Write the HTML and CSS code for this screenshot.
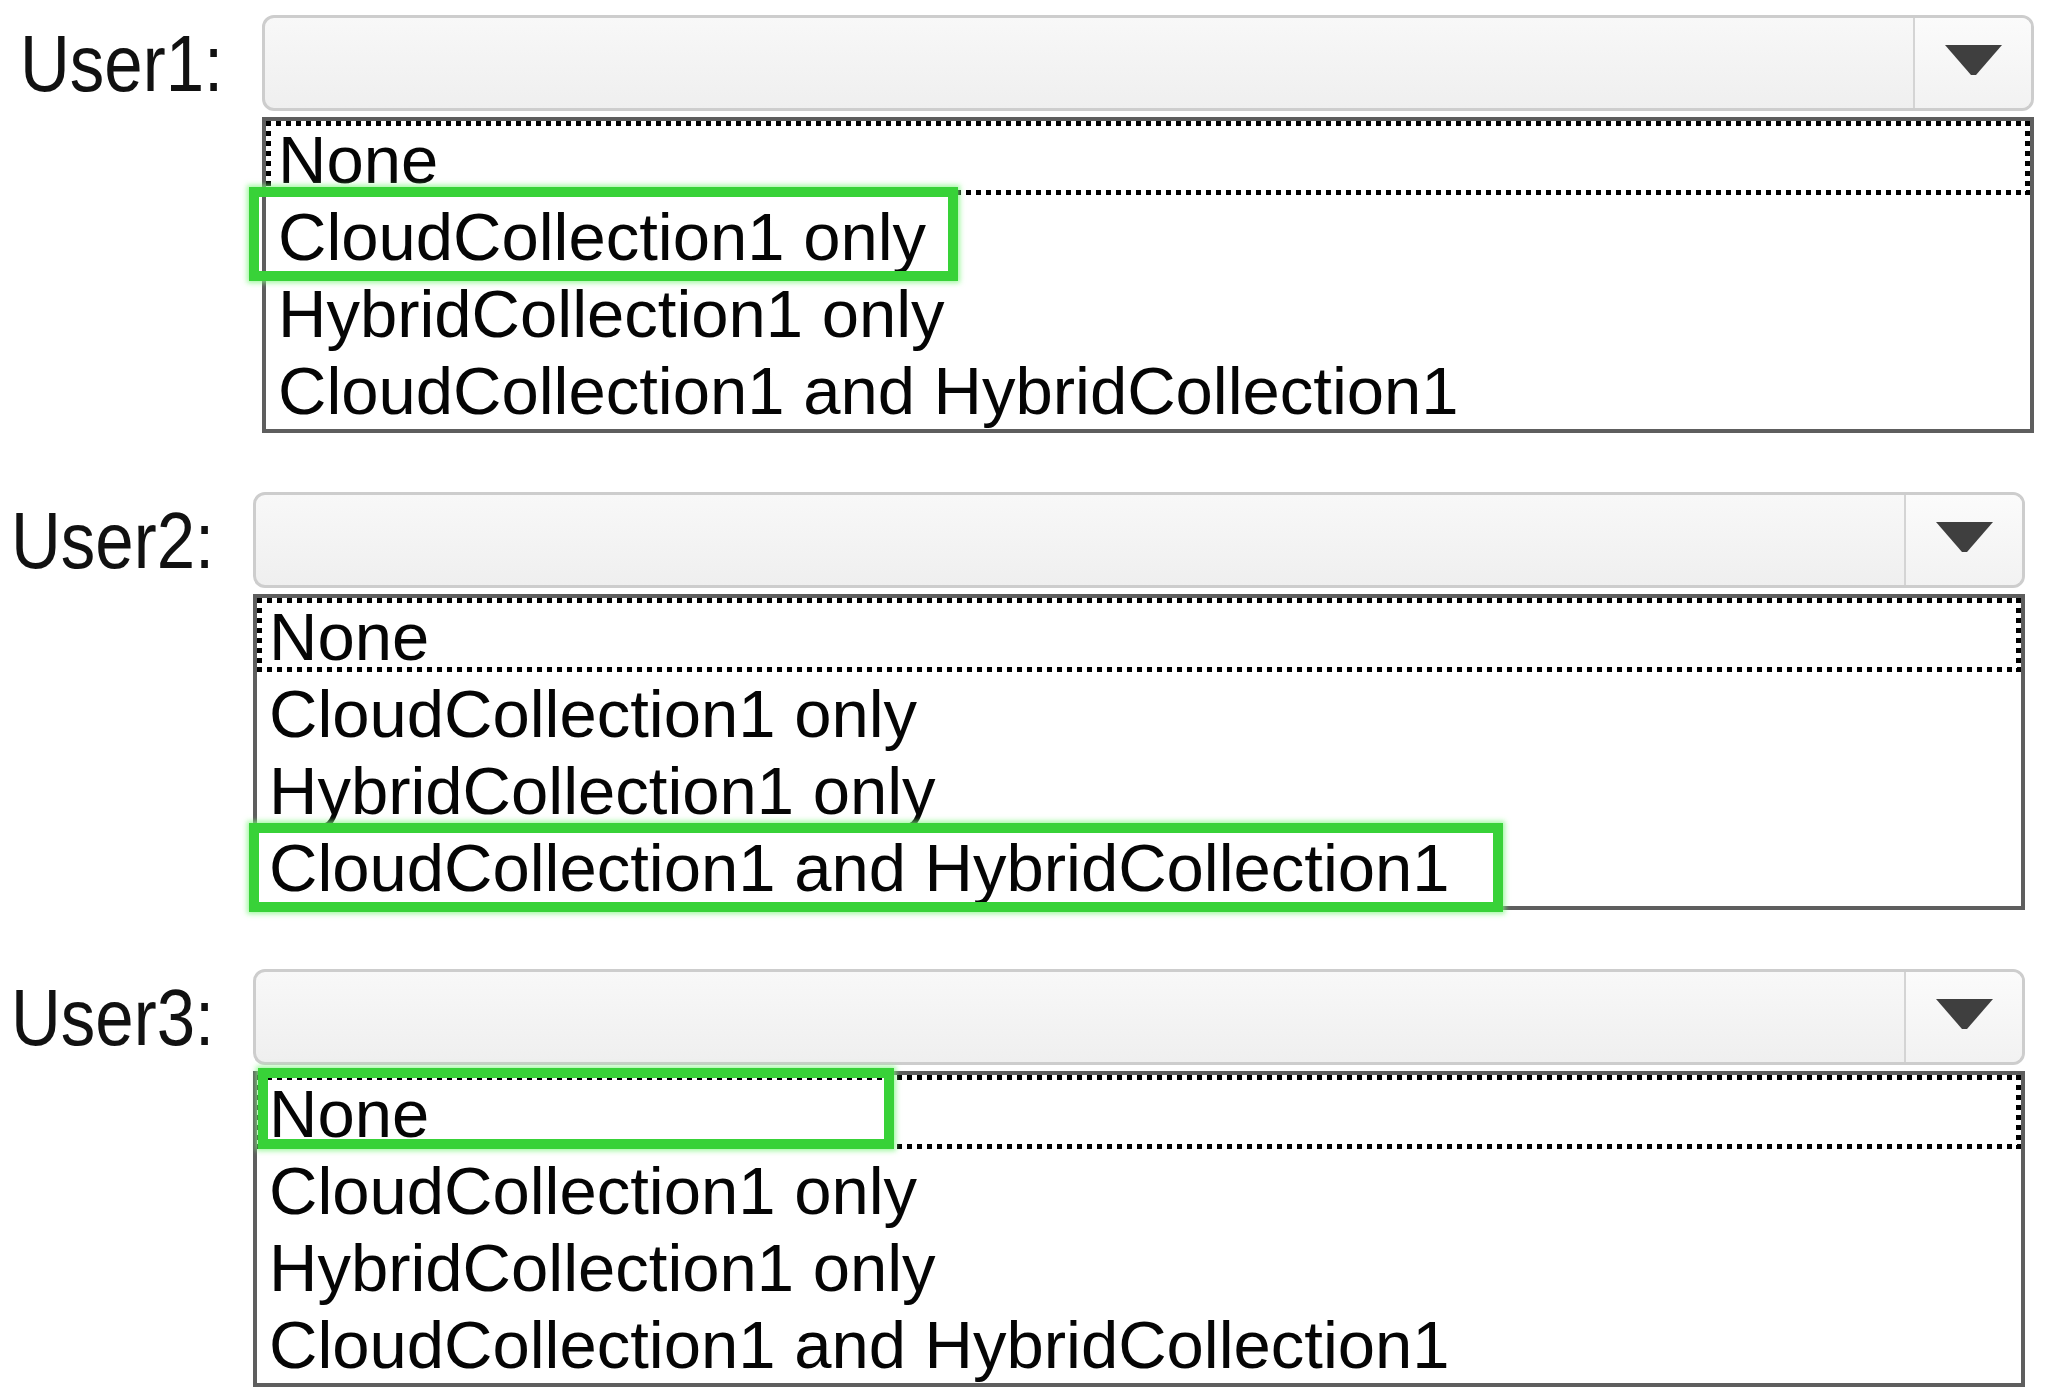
FILE: index.html
```html
<!DOCTYPE html>
<html lang="en">
<head>
    <meta charset="UTF-8">
    <meta name="viewport" content="width=device-width, initial-scale=1.0">
    <title>Collection access</title>
    <link rel="stylesheet" href="styles.css">
</head>
<body>
    <div class="answer-area">
        <!-- User1 -->
        <div class="answer-row first">
            <div class="user-label"><span>User1:</span></div>
            <div class="answer-field">
                <div class="combo">
                    <div class="combo-value"></div>
                    <div class="combo-button">
                        <svg viewBox="0 0 57 30"><polygon points="0,0 57,0 31,30 26,30" fill="#3f3f3f"/></svg>
                    </div>
                </div>
                <ul class="option-list">
                    <li class="option focused">None</li>
                    <li class="option">CloudCollection1 only<span class="mark mark-cloud"></span></li>
                    <li class="option">HybridCollection1 only</li>
                    <li class="option">CloudCollection1 and HybridCollection1</li>
                </ul>
            </div>
        </div>

        <!-- User2 -->
        <div class="answer-row">
            <div class="user-label"><span>User2:</span></div>
            <div class="answer-field">
                <div class="combo">
                    <div class="combo-value"></div>
                    <div class="combo-button">
                        <svg viewBox="0 0 57 30"><polygon points="0,0 57,0 31,30 26,30" fill="#3f3f3f"/></svg>
                    </div>
                </div>
                <ul class="option-list">
                    <li class="option focused">None</li>
                    <li class="option">CloudCollection1 only</li>
                    <li class="option">HybridCollection1 only</li>
                    <li class="option">CloudCollection1 and HybridCollection1<span class="mark mark-both"></span></li>
                </ul>
            </div>
        </div>

        <!-- User3 -->
        <div class="answer-row">
            <div class="user-label"><span>User3:</span></div>
            <div class="answer-field">
                <div class="combo">
                    <div class="combo-value"></div>
                    <div class="combo-button">
                        <svg viewBox="0 0 57 30"><polygon points="0,0 57,0 31,30 26,30" fill="#3f3f3f"/></svg>
                    </div>
                </div>
                <ul class="option-list">
                    <li class="option focused">None<span class="mark mark-none"></span></li>
                    <li class="option">CloudCollection1 only</li>
                    <li class="option">HybridCollection1 only</li>
                    <li class="option">CloudCollection1 and HybridCollection1</li>
                </ul>
            </div>
        </div>
    </div>
</body>
</html>
```

FILE: styles.css
```css
* {
    box-sizing: border-box;
}
body {
    margin: 0;
    background-color: #ffffff;
    font-family: "Liberation Sans", Arial, sans-serif;
    color: #050505;
}
.answer-area {
    display: flex;
    flex-direction: column;
    gap: 59px;
    padding: 15px 0 0 8px;
}
.answer-row {
    display: flex;
    align-items: flex-start;
}
.answer-row.first {
    padding-left: 9px;
}
.user-label {
    width: 245px;
    height: 96px;
    display: flex;
    align-items: center;
    padding-left: 3px;
    font-size: 69px;
    color: #111;
}
.user-label span {
    display: inline-block;
    transform: scaleY(1.16);
}
.answer-field {
    width: 1772px;
    display: flex;
    flex-direction: column;
    gap: 6px;
}
.combo {
    height: 96px;
    display: flex;
    border: 3px solid #cdcdcd;
    border-radius: 12px;
    background: linear-gradient(#f8f8f8, #efefef);
    overflow: hidden;
}
.combo-value {
    flex: 1;
}
.combo-button {
    width: 118px;
    display: flex;
    justify-content: center;
    align-items: center;
    border-left: 2px solid #d4d4d4;
    background: linear-gradient(#fbfbfb, #f2f2f2);
}
.combo-button svg {
    width: 57px;
    height: 30px;
    margin-top: -6px;
}
.option-list {
    list-style: none;
    margin: 0;
    padding: 0;
    border: 4px solid #5e5e5e;
    background-color: #fff;
}
.option {
    position: relative;
    height: 77px;
    line-height: 77px;
    padding-left: 12px;
    font-size: 67px;
    white-space: nowrap;
}
/* dotted focus rectangle on the first entry */
.option.focused::before {
    content: "";
    position: absolute;
    inset: 0 0 3px 0;
    background:
        repeating-linear-gradient(90deg, #000 0 5px, transparent 5px 10px) top left / 100% 5px no-repeat,
        repeating-linear-gradient(90deg, #000 0 5px, transparent 5px 10px) bottom left / 100% 5px no-repeat,
        repeating-linear-gradient(180deg, #000 0 5px, transparent 5px 10px) top left / 5px 100% no-repeat,
        repeating-linear-gradient(180deg, #000 0 5px, transparent 5px 10px) top right / 5px 100% no-repeat;
}
/* green answer markers */
.mark {
    position: absolute;
    z-index: 1;
    border: 10px solid #38d238;
    box-shadow: 0 0 5px 2px rgba(130, 245, 130, 0.75);
}
.mark-cloud {
    left: -17px;
    top: -11px;
    width: 709px;
    height: 94px;
}
.mark-both {
    left: -8px;
    top: -6px;
    width: 1254px;
    height: 89px;
}
.mark-none {
    left: 1px;
    top: -7px;
    width: 636px;
    height: 81px;
}
```
